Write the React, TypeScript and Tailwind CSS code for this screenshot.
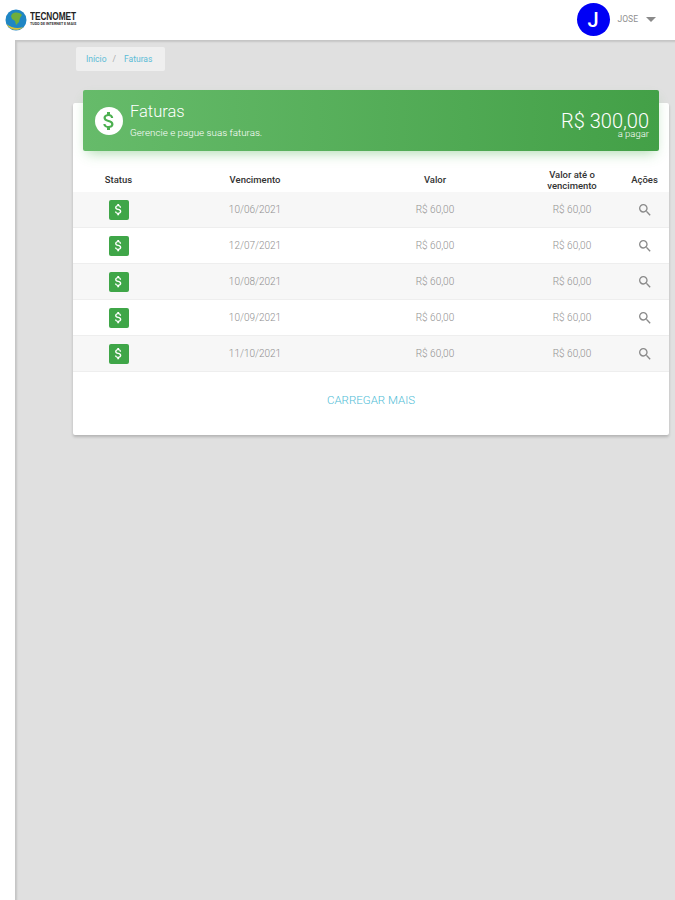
import React from "react"

const rows = ["10/06/2021", "12/07/2021", "10/08/2021", "10/09/2021", "11/10/2021"]

const gridCols = "grid grid-cols-[91px_182px_178px_96px_49px] items-center text-center"

const DollarGlyph = ({ className }: { className?: string }) => (
  <svg viewBox="0 0 24 24" fill="currentColor" className={className}>
    <path d="M11.8 10.9c-2.27-.59-3-1.2-3-2.15 0-1.09 1.01-1.85 2.7-1.85 1.78 0 2.44.85 2.5 2.1h2.21c-.07-1.72-1.12-3.3-3.21-3.81V3h-3v2.16c-1.94.42-3.5 1.68-3.5 3.61 0 2.31 1.91 3.46 4.7 4.13 2.5.6 3 1.48 3 2.41 0 .69-.49 1.79-2.7 1.79-2.06 0-2.87-.92-2.98-2.1h-2.2c.12 2.19 1.76 3.42 3.68 3.83V21h3v-2.15c1.95-.37 3.5-1.5 3.5-3.55 0-2.84-2.43-3.81-4.7-4.4z" />
  </svg>
)

const SearchIcon = () => (
  <svg viewBox="0 0 24 24" fill="#8a8a8a" className="w-[16px] h-[16px]">
    <path d="M15.5 14h-.79l-.28-.27A6.47 6.47 0 0 0 16 9.5 6.5 6.5 0 1 0 9.5 16c1.61 0 3.09-.59 4.23-1.57l.27.28v.79l5 4.99L20.49 19l-4.99-5zm-6 0C7.01 14 5 11.99 5 9.5S7.01 5 9.5 5 14 7.01 14 9.5 11.99 14 9.5 14z" />
  </svg>
)

const Logo = () => (
  <div className="flex items-center gap-[3px]">
    <svg viewBox="0 0 22 22" className="w-[22px] h-[22px]">
      <circle cx="11" cy="11" r="10.5" fill="#1f86c4" />
      <path d="M7 5c3-2 7-2 10 1l-2 3-1 4-3 3-1-4-3-2-1-3z" fill="#6fae3c" />
      <path d="M1.5 15c3 6 11 8 17 3-5 1.5-12 1.5-17-3z" fill="#d9c23a" />
    </svg>
    <div className="flex flex-col leading-none mt-[-2px]">
      <span className="text-[10.5px] font-bold text-[#222] tracking-[-0.1px] font-['Liberation_Sans',sans-serif] scale-x-[0.79] origin-left">TECNOMET</span>
      <span className="text-[3.7px] font-bold text-[#333] whitespace-nowrap mt-[1px]">TUDO DE INTERNET E MAIS</span>
    </div>
  </div>
)

export default function App() {
  return (
    <div className="w-[675px] h-[900px] bg-white overflow-hidden flex flex-col font-['Roboto',sans-serif]">
      <header className="h-10 shrink-0 bg-white flex items-center justify-between pl-[5px] pr-[19px] relative z-10">
        <Logo />
        <div className="flex items-center mt-[-1px]">
          <div className="w-[33px] h-[33px] rounded-full bg-[#0000f5] text-white flex items-center justify-center text-xl font-medium">J</div>
          <span className="ml-[8px] text-[8.5px] text-[#8f8f8f]">JOSE</span>
          <span className="ml-[8px] w-0 h-0 border-x-[5px] border-x-transparent border-t-[5px] border-t-[#8a8a8a]" />
        </div>
      </header>

      <div className="flex-1 flex">
        <div className="w-[15px] shrink-0 bg-white" />
        <main className="flex-1 bg-[#e0e0e0] shadow-[inset_2px_2px_2px_rgba(0,0,0,0.12)] pl-[58px] pr-[6px]">
          <nav className="ml-[3px] mt-[7px] w-[89px] h-6 bg-[#efefef] rounded-[2px] flex items-center pl-[10px] text-[8.5px] text-[#5bbcd6]">
            <span>Início</span>
            <span className="ml-[6px] text-[#aaa]">/</span>
            <span className="ml-[8px]">Faturas</span>
          </nav>

          <section className="mt-[32px] bg-white rounded-[2px] shadow-[0_2px_3px_rgba(0,0,0,0.2)] h-[332px] flex flex-col">
            <div className="relative z-10 mx-[10px] -mt-[13px] h-[61px] shrink-0 rounded-[2px] bg-gradient-to-r from-[#66bb6a] to-[#43a047] shadow-[0_6px_12px_-4px_rgba(76,175,80,0.45)] flex items-center justify-between pl-[12px] pr-[10px] text-white">
              <div className="flex items-center">
                <div className="w-7 h-7 rounded-full bg-white text-[#4caf50] flex items-center justify-center">
                  <DollarGlyph className="w-[24px] h-[24px]" />
                </div>
                <div className="ml-[7px] mt-[-1px]">
                  <div className="text-[16.5px] font-light leading-5">Faturas</div>
                  <div className="text-[9.8px] font-light leading-3 mt-[5px] text-white">Gerencie e pague suas faturas.</div>
                </div>
              </div>
              <div className="text-right mt-[8px]">
                <div className="text-[20px] font-light leading-[18px]">R$ 300,00</div>
                <div className="text-[9.5px] font-light leading-[8px] text-white">a pagar</div>
              </div>
            </div>

            <div className={`${gridCols} h-[24px] mt-[17px] text-[9.5px] font-medium text-[#333]`}>
              <span>Status</span>
              <span>Vencimento</span>
              <span>Valor</span>
              <span className="leading-[11px] px-[18px]">Valor até o vencimento</span>
              <span>Ações</span>
            </div>

            <div>
              {rows.map((date, i) => (
                <div key={date} className={`${gridCols} h-[36px] text-[10px] font-light text-[#8f8f8f] border-b border-[#eeeeee] ${i % 2 === 0 ? "bg-[#f7f7f7]" : "bg-white"}`}>
                  <div className="flex justify-center">
                    <div className="w-5 h-5 rounded-[2px] bg-[#3fa648] text-white flex items-center justify-center">
                      <DollarGlyph className="w-[15px] h-[15px]" />
                    </div>
                  </div>
                  <span>{date}</span>
                  <span>R$ 60,00</span>
                  <span>R$ 60,00</span>
                  <div className="flex justify-center">
                    <SearchIcon />
                  </div>
                </div>
              ))}
            </div>

            <div className="mt-[20px] text-center text-[11.5px] font-light text-[#4fbdd6]">CARREGAR MAIS</div>
          </section>
        </main>
      </div>
    </div>
  )
}
